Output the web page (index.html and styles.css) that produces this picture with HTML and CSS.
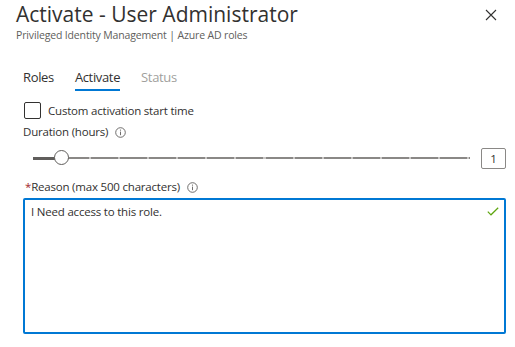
FILE: index.html
```html
<!DOCTYPE html>
<html lang="en">
<head>
  <meta charset="UTF-8">
  <title>Activate - User Administrator</title>
  <link rel="stylesheet" href="styles.css">
</head>
<body>

  <header class="panel-header">
    <div class="titles">
      <h1 class="title">Activate - User Administrator</h1>
      <div class="subtitle">Privileged Identity Management | Azure AD roles</div>
    </div>
    <button class="close-btn" aria-label="Close">
      <svg width="12" height="12" viewBox="0 0 12 12"><path d="M1 1 L11 11 M11 1 L1 11" stroke="#323130" stroke-width="1.1" fill="none"/></svg>
    </button>
  </header>

  <div class="content">
    <nav class="tabs">
      <span class="tab">Roles</span>
      <span class="tab active">Activate</span>
      <span class="tab disabled">Status</span>
    </nav>

    <label class="check-row">
      <span class="checkbox"></span>
      <span>Custom activation start time</span>
    </label>

    <div class="field-label">
      Duration (hours)
      <svg class="info" width="11" height="11" viewBox="0 0 11 11"><circle cx="5.5" cy="5.5" r="4.8" stroke="#605e5c" stroke-width="0.9" fill="none"/><path d="M5.5 4.6 V8.2" stroke="#605e5c" stroke-width="0.9"/><circle cx="5.5" cy="3.1" r="0.6" fill="#605e5c"/></svg>
    </div>

    <div class="slider-row">
      <div class="slider">
        <div class="track"></div>
        <div class="track-fill"></div>
        <div class="thumb"></div>
      </div>
      <div class="value-box">1</div>
    </div>

    <div class="field-label reason">
      <span class="required">*</span>Reason (max 500 characters)
      <svg class="info" width="11" height="11" viewBox="0 0 11 11"><circle cx="5.5" cy="5.5" r="4.8" stroke="#605e5c" stroke-width="0.9" fill="none"/><path d="M5.5 4.6 V8.2" stroke="#605e5c" stroke-width="0.9"/><circle cx="5.5" cy="3.1" r="0.6" fill="#605e5c"/></svg>
    </div>

    <div class="textarea">
      <span class="typed">I Need access to this role.</span>
      <svg class="valid" width="12" height="9" viewBox="0 0 12 9"><path d="M0.8 4.6 L4 7.8 L11.2 0.8" stroke="#5ea50f" stroke-width="1.2" fill="none"/></svg>
    </div>
  </div>

</body>
</html>
```

FILE: styles.css
```css
body {
  margin: 0;
  font-family: "Segoe UI", "Open Sans", sans-serif;
  color: #323130;
  background: #fff;
}

.panel-header {
  display: flex;
  justify-content: space-between;
  align-items: flex-start;
  padding: 0 18px 0 16px;
}
.title {
  margin: 0;
  font-size: 21px;
  font-weight: 400;
  line-height: 29px;
  color: #323130;
}
.subtitle {
  font-size: 10.5px;
  letter-spacing: -0.15px;
  line-height: 12px;
  color: #605e5c;
}
.close-btn {
  margin-top: 9px;
  padding: 0;
  border: none;
  background: none;
  width: 12px;
  height: 12px;
}
.close-btn svg { display: block; }

.content {
  padding: 0 9px 0 23px;
  font-size: 11.5px;
  letter-spacing: -0.2px;
}

.tabs {
  display: flex;
  gap: 21px;
  margin-top: 26px;
  font-size: 13px;
  letter-spacing: -0.35px;
  line-height: 20px;
}
.tab {
  padding-bottom: 2px;
  border-bottom: 2px solid transparent;
}
.tab.active { border-bottom-color: #0078d4; }
.tab.disabled { color: #a19f9d; }

.check-row {
  display: flex;
  align-items: center;
  gap: 7px;
  margin-top: 11px;
  height: 16px;
}
.checkbox {
  width: 15px;
  height: 15px;
  border: 1px solid #323130;
  border-radius: 2px;
  margin-left: 1px;
}

.field-label {
  display: flex;
  align-items: center;
  margin-top: 6px;
  line-height: 16px;
}
.field-label .info { margin-left: 7px; }
.field-label.reason { margin-top: 10px; }
.required { color: #a4262c; margin: 0 0 0 2px; }

.slider-row {
  display: flex;
  align-items: center;
  gap: 11px;
  margin-top: 8px;
  height: 21px;
}
.slider {
  position: relative;
  flex: 1;
  height: 21px;
  margin-left: 10px;
}
.track {
  position: absolute;
  left: 0;
  right: 0;
  top: 9px;
  height: 2px;
  background: repeating-linear-gradient(to right, #8a8886 0 27px, #c8c6c4 27px 29.07px);
}
.track-fill {
  position: absolute;
  left: 0;
  top: 9px;
  width: 28px;
  height: 3px;
  background: #605e5c;
}
.thumb {
  position: absolute;
  left: 21px;
  top: 2px;
  width: 13px;
  height: 13px;
  border: 1px solid #605e5c;
  border-radius: 50%;
  background: #fff;
}
.value-box {
  width: 23px;
  height: 19px;
  border: 1px solid #8a8886;
  border-radius: 2px;
  line-height: 19px;
  text-align: center;
}

.textarea {
  position: relative;
  margin-top: 3px;
  width: 479px;
  height: 132px;
  border: 2px solid #0078d4;
  border-radius: 2px;
}
.typed {
  display: block;
  padding: 4px 0 0 6px;
  line-height: 16px;
}
.valid {
  position: absolute;
  right: 5px;
  top: 7px;
}
```
